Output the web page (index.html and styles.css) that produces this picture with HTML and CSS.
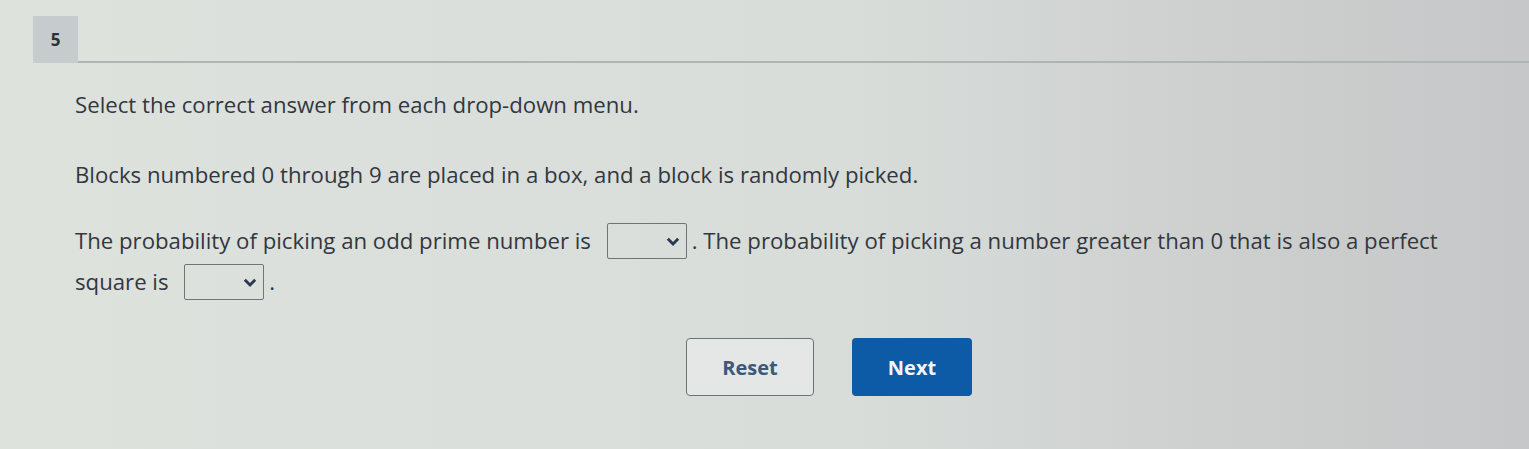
FILE: index.html
```html
<!DOCTYPE html>
<html>
<head>
<meta charset="utf-8">
<link rel="stylesheet" href="styles.css">
</head>
<body>
<div class="page">
  <header class="head">
    <div class="num">5</div>
    <div class="rule"></div>
  </header>
  <main class="content">
    <p class="instr">Select the correct answer from each drop-down menu.</p>
    <p class="stem">Blocks numbered 0 through 9 are placed in a box, and a block is randomly picked.</p>
    <p class="q">The probability of picking an odd prime number is <span class="dd"><svg class="chev" viewBox="0 0 14 9" width="14" height="9"><path d="M1.8 1.8 L7 7 L12.2 1.8" fill="none" stroke="#2a3850" stroke-width="2.8"/></svg></span>. The probability of picking a number greater than 0 that is also a perfect square is <span class="dd"><svg class="chev" viewBox="0 0 14 9" width="14" height="9"><path d="M1.8 1.8 L7 7 L12.2 1.8" fill="none" stroke="#2a3850" stroke-width="2.8"/></svg></span>.</p>
    <div class="actions">
      <button class="btn reset">Reset</button>
      <button class="btn next">Next</button>
    </div>
  </main>
</div>
</body>
</html>
```
FILE: styles.css
```css
html, body {
  margin: 0;
  height: 100%;
}
body {
  background: linear-gradient(90deg, #dde2dd 0%, #d8ddda 55%, #cfd2d1 75%, #c6c7c8 100%);
  font-family: "Open Sans", "Noto Sans", sans-serif;
  color: #33373f;
}
.page {
  width: 1529px;
  height: 449px;
  overflow: hidden;
}
.head {
  display: flex;
  padding: 16px 0 0 33px;
}
.num {
  width: 45px;
  height: 47px;
  background: #c6cbcd;
  display: flex;
  align-items: center;
  justify-content: center;
  font-weight: 700;
  font-size: 17px;
  color: #2d323a;
}
.rule {
  flex: 1;
  align-self: flex-end;
  border-bottom: 2px solid #aeb6b4;
}
.content {
  padding-left: 75px;
}
.content p {
  margin: 0;
  font-size: 22.2px;
}
.instr {
  padding-top: 27px;
  line-height: 30px;
}
.stem {
  padding-top: 40px;
  line-height: 30px;
}
.q {
  padding-top: 30px;
  line-height: 41px;
  width: 1420px;
}
.dd {
  display: inline-flex;
  align-items: center;
  justify-content: flex-end;
  box-sizing: border-box;
  width: 80px;
  height: 36px;
  border: 1.5px solid #6f7478;
  border-radius: 2px;
  vertical-align: middle;
  margin: 0 5px 0 10px;
  padding-right: 6px;
  position: relative;
  top: -2px;
}
.actions {
  display: flex;
  gap: 38px;
  padding-top: 36px;
  padding-left: 611px;
}
.btn {
  height: 58px;
  border-radius: 4px;
  font-family: "Open Sans", "Noto Sans", sans-serif;
  font-weight: 700;
  font-size: 20px;
}
.reset {
  width: 128px;
  background: #e4e7e5;
  border: 1.5px solid #6c7377;
  color: #3a5878;
}
.next {
  width: 120px;
  background: #0d5aa6;
  border: none;
  color: #f2f6fa;
}
```
